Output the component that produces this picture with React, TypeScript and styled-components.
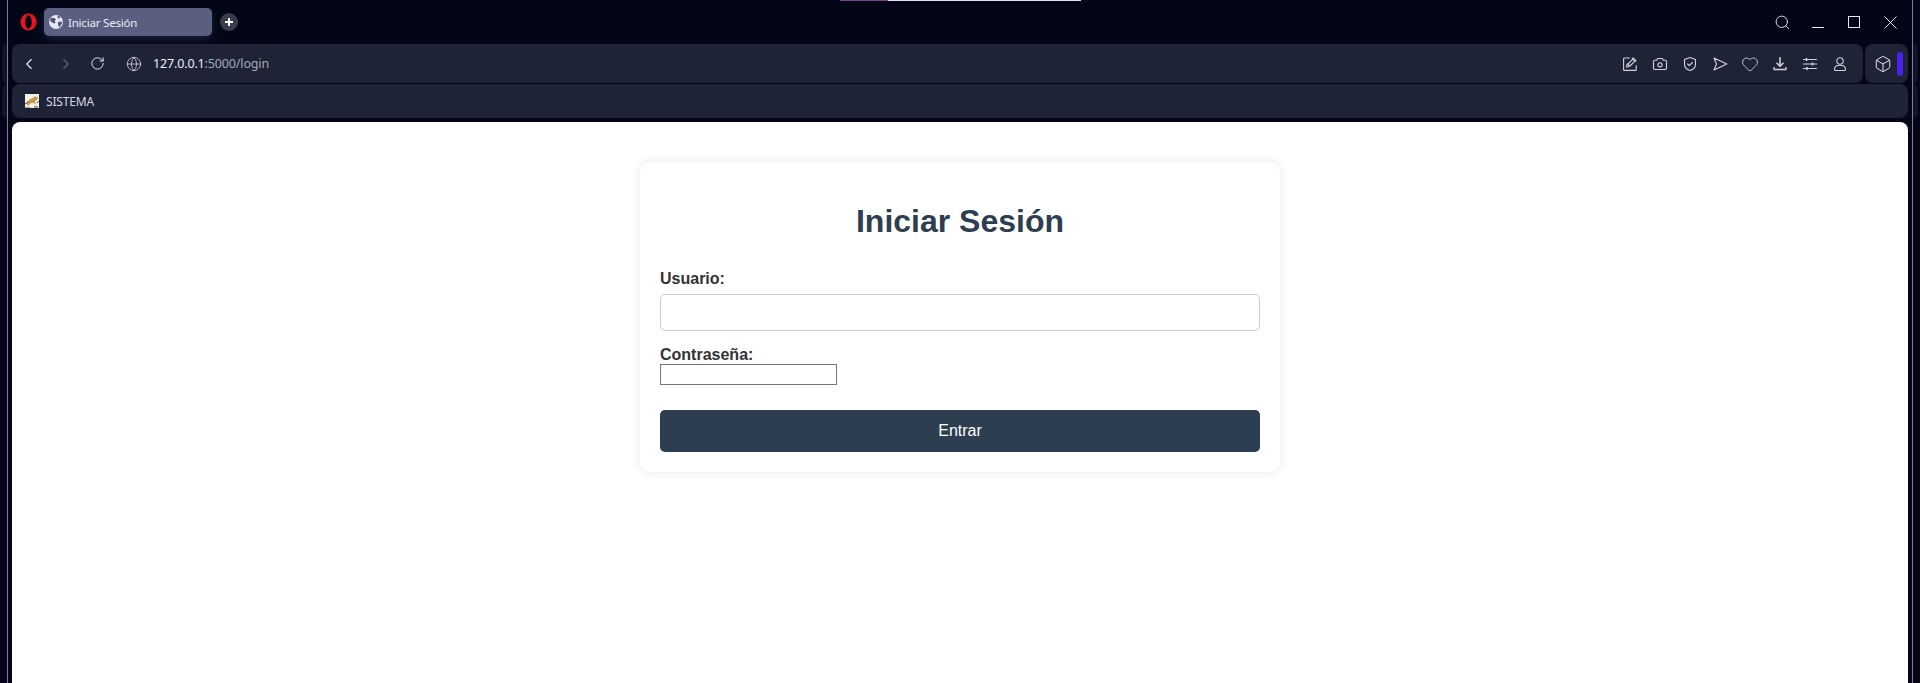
import type { ReactNode } from "react";
import styled, { createGlobalStyle } from "styled-components";
import { Box, ChevronLeft, ChevronRight, Globe, Heart, RotateCw, Search } from "lucide-react";

const GlobalStyle = createGlobalStyle`
  html, body {
    margin: 0;
    height: 100%;
    background: #020616;
    overflow: hidden;
  }
`;

const Shell = styled.div`
  display: flex;
  height: 683px;
  background: #020616;
  font-family: "Noto Sans", "Open Sans", sans-serif;
  position: relative;
`;

const TopGlint = styled.div`
  position: absolute;
  top: 0;
  left: 840px;
  width: 241px;
  height: 1px;
  background: linear-gradient(to right, #7a4585 0, #7a4585 48px, #dfe1ea 48px);
`;

const Gutter = styled.div<{ side: "left" | "right" }>`
  width: 8px;
  box-sizing: border-box;
  ${(p) => (p.side === "left" ? "border-right" : "border-left")}: 1px solid #8d7299;
  display: flex;
  flex-direction: column;
  gap: 1px;
  padding-top: 44px;
  align-items: ${(p) => (p.side === "left" ? "flex-end" : "flex-start")};
`;

const GhostPanel = styled.div<{ side: "left" | "right"; h: number }>`
  width: 5px;
  height: ${(p) => p.h}px;
  background: #12152a;
  border-radius: ${(p) => (p.side === "left" ? "6px 0 0 6px" : "0 6px 6px 0")};
`;

const Main = styled.div`
  flex: 1;
  min-width: 0;
  display: flex;
  flex-direction: column;
  padding: 0 4px;
`;

const TitleBar = styled.div`
  height: 44px;
  display: flex;
  align-items: center;
  flex-shrink: 0;
`;

const Logo = styled.svg`
  width: 17px;
  height: 18px;
  margin-left: 8px;
  flex-shrink: 0;
`;

const Tab = styled.div`
  width: 168px;
  height: 28px;
  margin-left: 7px;
  border-radius: 5px;
  background: #5a5e80;
  box-shadow: 0 4px 10px rgba(90, 94, 128, 0.28);
  display: flex;
  align-items: center;
  padding-left: 5px;
  box-sizing: border-box;
  gap: 5px;
  color: #eceef6;
  font-size: 11.5px;
  letter-spacing: -0.2px;
`;

const TabGlobe = styled.svg`
  width: 14px;
  height: 14px;
`;

const NewTab = styled.div`
  width: 18px;
  height: 18px;
  margin-left: 8px;
  border-radius: 50%;
  background: #393c4a;
  display: flex;
  align-items: center;
  justify-content: center;
`;

const WindowControls = styled.div`
  margin-left: auto;
  display: flex;
  align-items: center;
`;

const ControlSlot = styled.div`
  width: 36px;
  height: 24px;
  display: flex;
  align-items: center;
  justify-content: center;
  color: #e6e8f0;
`;

const MinLine = styled.div`
  width: 12px;
  height: 1px;
  background: #e6e8f0;
  margin-top: 11px;
`;

const MaxBox = styled.div`
  width: 12px;
  height: 12px;
  box-sizing: border-box;
  border: 1px solid #e6e8f0;
`;

const AddressRow = styled.div`
  display: flex;
  gap: 2px;
  height: 39px;
  flex-shrink: 0;
`;

const AddressBar = styled.div`
  flex: 1;
  background: #1f2336;
  border-radius: 8px;
  display: flex;
  align-items: center;
  color: #c9ccd8;
`;

const NavSlot = styled.div<{ w: number; dim?: boolean }>`
  width: ${(p) => p.w}px;
  display: flex;
  align-items: center;
  justify-content: center;
  flex-shrink: 0;
  color: ${(p) => (p.dim ? "#5f6375" : "#e6e8f0")};
`;

const SiteSlot = styled(NavSlot)`
  margin-left: 7px;
`;

const Url = styled.div`
  font-size: 12.5px;
  color: #a4a8b8;
  letter-spacing: -0.15px;

  b {
    font-weight: 400;
    color: #eceef6;
  }
`;

const ToolIcons = styled.div`
  margin-left: auto;
  display: flex;
  align-items: center;
  padding-right: 8px;
`;

const ToolSlot = styled.div`
  width: 30px;
  display: flex;
  justify-content: center;
  color: #d0d3de;
`;

const ExtensionTile = styled.div`
  width: 43px;
  background: #1f2336;
  border-radius: 8px;
  display: flex;
  align-items: center;
  box-sizing: border-box;
  padding-left: 9px;
  gap: 5px;
  color: #e6e8f0;
  flex-shrink: 0;
`;

const ExtensionPill = styled.div`
  width: 6px;
  height: 24px;
  border-radius: 3px;
  background: #4b20f0;
`;

const BookmarksBar = styled.div`
  height: 34px;
  margin-top: 1px;
  background: #1f2336;
  border-radius: 8px;
  display: flex;
  align-items: center;
  padding-left: 13px;
  gap: 7px;
  flex-shrink: 0;
  color: #d5d8e2;
  font-size: 12px;
  letter-spacing: -0.15px;
`;

const Favicon = styled.svg`
  width: 14px;
  height: 14px;
`;

const Page = styled.main`
  flex: 1;
  margin-top: 4px;
  background: #ffffff;
  border-radius: 8px 8px 0 0;
  padding-top: 40px;
  font-family: "Liberation Sans", Arial, sans-serif;
`;

const Card = styled.form`
  width: 640px;
  box-sizing: border-box;
  margin: 0 auto;
  padding: 20px;
  background: #ffffff;
  border-radius: 10px;
  box-shadow: 0 0 10px rgba(0, 0, 0, 0.1);
`;

const Heading = styled.h1`
  margin: 21px 0 30px;
  color: #2c3e50;
  font-size: 32px;
  line-height: 37px;
  font-weight: 700;
  text-align: center;
`;

const Label = styled.label<{ tight?: boolean }>`
  display: block;
  color: #333333;
  font-size: 16px;
  line-height: 18px;
  font-weight: 700;
  margin-bottom: ${(p) => (p.tight ? "0" : "6px")};
`;

const TextInput = styled.input`
  display: block;
  width: 100%;
  height: 37px;
  box-sizing: border-box;
  border: 1px solid #cccccc;
  border-radius: 5px;
  margin-bottom: 15px;
  background: #fff;
`;

const PasswordInput = styled.input`
  display: block;
  width: 177px;
  height: 21px;
  box-sizing: border-box;
  border: 1px solid #767676;
  border-radius: 0;
  padding: 1px 2px;
  margin: 0 0 25px;
  background: #fff;
`;

const SubmitButton = styled.button`
  display: block;
  width: 100%;
  height: 42px;
  border: 0;
  border-radius: 5px;
  background: #2c3e50;
  color: #ffffff;
  font-family: inherit;
  font-size: 16px;
`;

const ToolSvg = ({ children }: { children: ReactNode }) => (
  <svg width="16" height="16" viewBox="0 0 16 16" fill="none" stroke="currentColor" strokeWidth="1.1" strokeLinecap="round" strokeLinejoin="round">
    {children}
  </svg>
);

const toolIcons = [
  <ToolSvg key="snap">
    <path d="M7.500 2H2.300c-.4 0-.7.3-.7.700v11c0 .4.300.7.700.7h11.200c.4 0 .7-.3.7-.7V9.500" />
    <path d="M4.800 11.200l1.200-.4 1.600-1-2-2-.9 1.600z" />
    <path d="M6 8l4.800-4.800 2 2L8 10" />
    <path d="M10.300 2.700l.8-.8 2.800 2.800-.8.8" />
  </ToolSvg>,
  <ToolSvg key="camera">
    <path d="M1.500 5.500c0-.7.5-1.200 1.200-1.200h2l1-1.800h4.600l1 1.800h2c.7 0 1.200.5 1.200 1.200v6.800c0 .7-.5 1.200-1.200 1.200H2.700c-.7 0-1.200-.5-1.200-1.200z" />
    <circle cx="8" cy="8.800" r="2.100" />
  </ToolSvg>,
  <ToolSvg key="shield">
    <path d="M8 1.500l5.500 2v5c0 3.200-2.500 5-5.500 6-3-1-5.500-2.800-5.500-6v-5z" />
    <path d="M5.600 8l1.700 1.700 3.100-3.200" />
  </ToolSvg>,
  <ToolSvg key="send">
    <path d="M2 2L14.800 8 2 14 4.500 8z" />
  </ToolSvg>,
  <Heart key="heart" size={18} strokeWidth={1.15} />,
  <ToolSvg key="download">
    <path d="M8 1.800v8" strokeWidth="1.600" />
    <path d="M5 7.200L8 10.200l3-3" strokeWidth="1.600" />
    <path d="M2 11.500v2h12v-2" strokeWidth="1.300" />
  </ToolSvg>,
  <ToolSvg key="sliders">
    <path d="M1.500 3.500h13M1.500 8h13M1.500 12.500h13" />
    <path d="M4.500 2.500v2M10.500 7v2M5 11.500v2" strokeWidth="1.500" />
  </ToolSvg>,
  <ToolSvg key="user">
    <circle cx="8" cy="5" r="3.200" />
    <path d="M3 14.500a2.200 2.200 0 0 1-.5-1.500c0-2 2-3.800 5.500-3.800s5.500 1.800 5.500 3.800c0 .6-.2 1.100-.5 1.500z" />
  </ToolSvg>,
];

export default function App() {
  return (
    <>
      <GlobalStyle />
      <Shell>
        <TopGlint />
        <Gutter side="left">
          <GhostPanel side="left" h={39} />
          <GhostPanel side="left" h={34} />
        </Gutter>
        <Main>
          <TitleBar>
            <Logo viewBox="0 0 17 18">
              <path
                fillRule="evenodd"
                d="M8.500 0.500c4.500 0 8 3.800 8 8.500s-3.500 8.500-8 8.500-8-3.800-8-8.500 3.500-8.500 8-8.500zM8.500 2.300C6.700 2.300 5.300 5.300 5.300 9s1.400 6.700 3.200 6.700 3.200-3 3.200-6.700-1.400-6.700-3.200-6.700z"
                fill="#e8141f"
              />
            </Logo>
            <Tab>
              <TabGlobe viewBox="0 0 14 14">
                <circle cx="7" cy="7" r="7" fill="#e6e8f0" />
                <path d="M2 2.800l3.400.2 1.600 1.500-1.300 1.500.8 1.500-.8 1-1.800-.6L1 5.800zM8.500.8l3 1-1.200 1.600-1.500-.5zM9 7l3.400-.5.8 1.500-2.700 4.200-1-1-.5-2.400z" fill="#50547a" />
              </TabGlobe>
              Iniciar Sesión
            </Tab>
            <NewTab>
              <svg width="10" height="10" viewBox="0 0 10 10">
                <path d="M5 1v8M1 5h8" stroke="#ffffff" strokeWidth="2" />
              </svg>
            </NewTab>
            <WindowControls>
              <ControlSlot>
                <Search size={17} strokeWidth={1.3} />
              </ControlSlot>
              <ControlSlot>
                <MinLine />
              </ControlSlot>
              <ControlSlot>
                <MaxBox />
              </ControlSlot>
              <ControlSlot>
                <svg width="13" height="13" viewBox="0 0 13 13">
                  <path d="M0.500 0.500l12 12M12.500 0.500l-12 12" stroke="currentColor" strokeWidth="1" />
                </svg>
              </ControlSlot>
            </WindowControls>
          </TitleBar>
          <AddressRow>
            <AddressBar>
              <NavSlot w={34}>
                <ChevronLeft size={18} strokeWidth={1.5} />
              </NavSlot>
              <NavSlot w={40} dim>
                <ChevronRight size={18} strokeWidth={1.5} />
              </NavSlot>
              <NavSlot w={22}>
                <RotateCw size={15} strokeWidth={1.6} />
              </NavSlot>
              <SiteSlot w={38}>
                <Globe size={16} strokeWidth={1.1} />
              </SiteSlot>
              <Url>
                <b>127.0.0.1</b>:5000/login
              </Url>
              <ToolIcons>
                {toolIcons.map((icon, i) => (
                  <ToolSlot key={i}>{icon}</ToolSlot>
                ))}
              </ToolIcons>
            </AddressBar>
            <ExtensionTile>
              <Box size={18} strokeWidth={1.3} />
              <ExtensionPill />
            </ExtensionTile>
          </AddressRow>
          <BookmarksBar>
            <Favicon viewBox="0 0 14 14">
              <rect width="14" height="14" fill="#f4f2ea" />
              <path d="M2 8l3-3 3-1 2-2 1 1 2 0-1 3-2 1 1 4-2-2-3 0-3 3-1-2z" fill="#c49a4a" />
              <path d="M0 10l3-2M0 14h5M9 13l4 0M12 9l2-2" stroke="#4a4638" strokeWidth="1" />
            </Favicon>
            SISTEMA
          </BookmarksBar>
          <Page>
            <Card onSubmit={(e) => e.preventDefault()}>
              <Heading>Iniciar Sesión</Heading>
              <Label htmlFor="usuario">Usuario:</Label>
              <TextInput id="usuario" type="text" />
              <Label htmlFor="contrasena" tight>
                Contraseña:
              </Label>
              <PasswordInput id="contrasena" type="password" />
              <SubmitButton type="submit">Entrar</SubmitButton>
            </Card>
          </Page>
        </Main>
        <Gutter side="right">
          <GhostPanel side="right" h={39} />
          <GhostPanel side="right" h={34} />
        </Gutter>
      </Shell>
    </>
  );
}
